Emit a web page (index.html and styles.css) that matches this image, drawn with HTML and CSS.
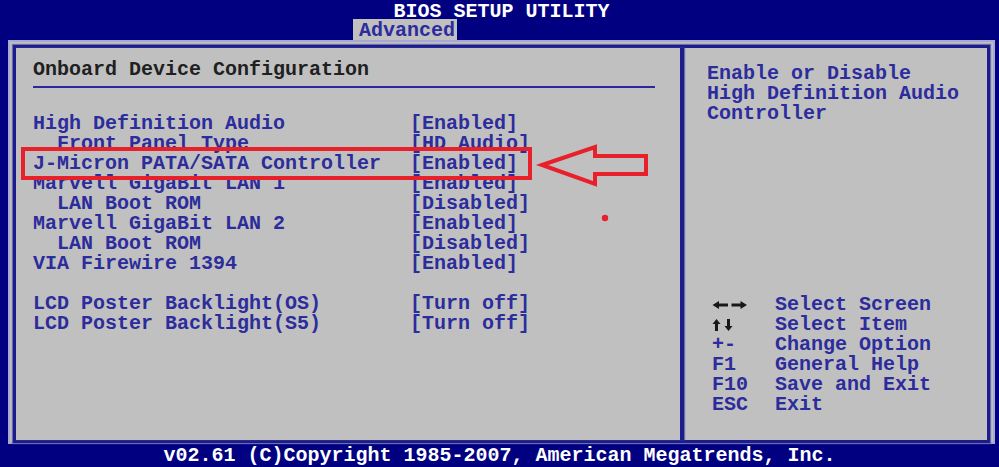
FILE: index.html
```html
<!DOCTYPE html>
<html lang="en">
<head>
    <meta charset="UTF-8">
    <title>BIOS Setup Utility</title>
    <link rel="stylesheet" href="styles.css">
</head>
<body>
    <div class="screen">
        <div class="title">BIOS SETUP UTILITY</div>
        <div class="tabs"><span class="tab">Advanced</span></div>

        <div class="frame">
            <div class="panes">
                <div class="main-pane">
                    <div class="heading">Onboard Device Configuration</div>
                    <div class="rule"></div>

                    <div class="options">
                        <div class="row"><span class="label">High Definition Audio</span><span class="value">[Enabled]</span></div>
                        <div class="row"><span class="label sub">Front Panel Type</span><span class="value">[HD Audio]</span></div>
                        <div class="row"><span class="label">J-Micron PATA/SATA Controller</span><span class="value">[Enabled]</span></div>
                        <div class="row"><span class="label">Marvell GigaBit LAN 1</span><span class="value">[Enabled]</span></div>
                        <div class="row"><span class="label sub">LAN Boot ROM</span><span class="value">[Disabled]</span></div>
                        <div class="row"><span class="label">Marvell GigaBit LAN 2</span><span class="value">[Enabled]</span></div>
                        <div class="row"><span class="label sub">LAN Boot ROM</span><span class="value">[Disabled]</span></div>
                        <div class="row"><span class="label">VIA Firewire 1394</span><span class="value">[Enabled]</span></div>
                        <div class="row blank"></div>
                        <div class="row"><span class="label">LCD Poster Backlight(OS)</span><span class="value">[Turn off]</span></div>
                        <div class="row"><span class="label">LCD Poster Backlight(S5)</span><span class="value">[Turn off]</span></div>
                    </div>
                </div>

                <div class="help-pane">
                    <div class="help-text">
                        Enable or Disable<br>
                        High Definition Audio<br>
                        Controller
                    </div>

                    <div class="keys">
                        <div class="key-row">
                            <span class="key">
                                <svg width="36" height="20" viewBox="0 0 36 20">
                                    <path d="M0.5 10 L7 6 L7 8.5 L16 8.5 L16 11.5 L7 11.5 L7 14 Z" fill="#181818"/>
                                    <path d="M35 10 L28.5 6 L28.5 8.5 L19.5 8.5 L19.5 11.5 L28.5 11.5 L28.5 14 Z" fill="#181818"/>
                                </svg>
                            </span>
                            <span class="desc">Select Screen</span>
                        </div>
                        <div class="key-row">
                            <span class="key">
                                <svg width="36" height="20" viewBox="0 0 36 20">
                                    <path d="M4.5 4 L8.5 9 L6 9 L6 16 L3 16 L3 9 L0.5 9 Z" fill="#181818"/>
                                    <path d="M16.5 16 L20.5 11 L18 11 L18 4 L15 4 L15 11 L12.5 11 Z" fill="#181818"/>
                                </svg>
                            </span>
                            <span class="desc">Select Item</span>
                        </div>
                        <div class="key-row"><span class="key">+-</span><span class="desc">Change Option</span></div>
                        <div class="key-row"><span class="key">F1</span><span class="desc">General Help</span></div>
                        <div class="key-row"><span class="key">F10</span><span class="desc">Save and Exit</span></div>
                        <div class="key-row"><span class="key">ESC</span><span class="desc">Exit</span></div>
                    </div>
                </div>
            </div>
        </div>

        <div class="footer">v02.61 (C)Copyright 1985-2007, American Megatrends, Inc.</div>

        <!-- red annotation drawn on top of the screen -->
        <svg class="markup" width="999" height="467" viewBox="0 0 999 467">
            <rect x="23" y="149" width="507" height="29" fill="none" stroke="#e8202a" stroke-width="4"/>
            <path d="M542 165 L595 147 L595 156 L646 156 L646 174 L595 174 L595 184 Z" fill="none" stroke="#e8202a" stroke-width="4" stroke-linejoin="miter"/>
            <circle cx="605" cy="218" r="3.2" fill="#e8202a"/>
        </svg>
    </div>
</body>
</html>
```

FILE: styles.css
```css
body {
    margin: 0;
    background-color: #000080;
    font-family: "Liberation Mono", "DejaVu Sans Mono", monospace;
    font-size: 20px;
    font-weight: bold;
    line-height: 20px;
}

.screen {
    position: relative;
    width: 999px;
    height: 467px;
    background-color: #000080;
    overflow: hidden;
}

.title {
    height: 19px;
    line-height: 23px;
    color: #ffffff;
    text-align: center;
    padding-left: 4px;
}

.tabs {
    height: 21px;
    padding-left: 353px;
}

.tab {
    display: inline-block;
    height: 21px;
    line-height: 23px;
    padding: 0 2px 0 6px;
    background-color: #c0c0c0;
    color: #2c2c9c;
}

.frame {
    margin-left: 8px;
    width: 981px;
    height: 398px;
    padding: 1px;
    background-color: #c0c0c0;
    border: 2px solid #a8a8d4;
}

.panes {
    display: flex;
    height: 392px;
    margin: 2px;
    border: 3px solid #1c1c8c;
    box-shadow: 0 0 1px 1px #6c6cb0;
}

.main-pane {
    width: 647px;
    padding: 12px 0 0 17px;
    border-right: 4px solid #1c1c8c;
    box-shadow: 1px 0 1px #6c6cb0;
}

.heading {
    color: #202020;
}

.rule {
    width: 622px;
    height: 2px;
    margin-top: 6px;
    background-color: #2828a0;
}

.options {
    margin-top: 26px;
}

.row {
    display: flex;
    height: 20px;
    color: #2c2c9c;
}

.label {
    width: 377px;
    white-space: pre;
}

.label.sub {
    padding-left: 24px;
    width: 353px;
}

.value {
    white-space: pre;
}

.help-pane {
    flex: 1;
    display: flex;
    flex-direction: column;
    padding: 16px 0 25px 23px;
    color: #2c2c9c;
}

.keys {
    margin-top: auto;
}

.key-row {
    display: flex;
    height: 20px;
}

.key {
    display: flex;
    align-items: center;
    width: 63px;
    padding-left: 5px;
}

.key svg {
    display: block;
    filter: blur(0.4px);
}

.footer {
    height: 22px;
    color: #ffffff;
    text-align: center;
    line-height: 22px;
    padding-top: 1px;
}

.markup {
    position: absolute;
    left: 0;
    top: 0;
    pointer-events: none;
}
```
